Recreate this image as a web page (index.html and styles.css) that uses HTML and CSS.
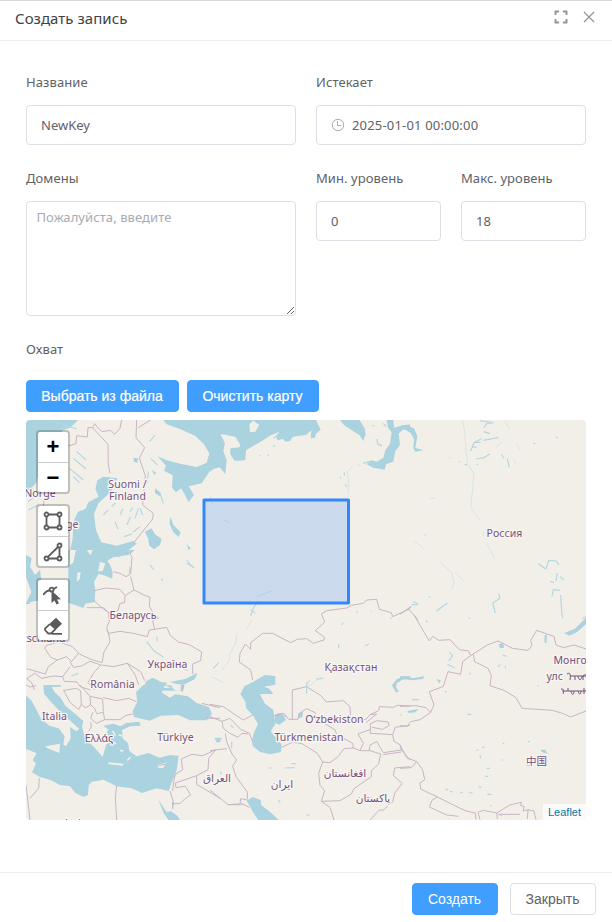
FILE: index.html
```html
<!DOCTYPE html>
<html lang="ru">
<head>
<meta charset="utf-8">
<title>Создать запись</title>
<link rel="stylesheet" href="styles.css">
</head>
<body>
<div class="dialog">
  <header class="head">
    <h1 class="title">Создать запись</h1>
    <div class="head-actions">
      <svg width="14" height="14" viewBox="0 0 14 14" fill="none" stroke="#909399" stroke-width="1.9"><path d="M1.500 5V1.500h3.600M8.900 1.500h3.600V5M12.500 9v3.500H8.900M5.100 12.500H1.500V9"/></svg>
      <svg width="12" height="12" viewBox="0 0 12 12" fill="none" stroke="#909399" stroke-width="1.2"><path d="M1 1l10 10M11 1L1 11"/></svg>
    </div>
  </header>
  <main class="body">
    <div class="grid">
      <div class="field wide"><label class="label">Название</label><input class="input" value="NewKey"></div>
      <div class="field wide"><label class="label">Истекает</label>
        <div class="input date"><svg width="14" height="14" viewBox="0 0 14 14" fill="none" stroke="#a8abb2"><circle cx="7" cy="7" r="5.700"/><path d="M6.500 3.500v4h3.700"/></svg><span>2025-01-01 00:00:00</span></div></div>
      <div class="field wide"><label class="label">Домены</label><textarea class="area" placeholder="Пожалуйста, введите"></textarea></div>
      <div class="field"><label class="label">Мин. уровень</label><input class="input" value="0"></div>
      <div class="field"><label class="label">Макс. уровень</label><input class="input" value="18"></div>
    </div>
    <label class="label extent">Охват</label>
    <div class="row"><button class="btn primary">Выбрать из файла</button><button class="btn primary">Очистить карту</button></div>
    <div class="map">
      <svg class="tiles" width="560" height="400" viewBox="26 420 560 400">
        <!-- Scandinavia, Baltic, White Sea -->
        <g transform="translate(20 415) scale(.33333)">
          <path class="w" d="M18 15H175L150 38 128 46 118 70 98 92 80 130 62 160 48 205 18 235Z"/>
          <path class="w" d="M430 15L440 28 480 42 525 62 552 88 568 115 560 143 530 156 480 146 440 136 413 124 438 152 432 168 458 180 456 218 468 232 484 220 506 262 522 240 506 214 545 205 556 188 572 165 602 155V15Z"/>
          <path class="w" d="M292 190L250 185 232 196 226 222 236 245 205 262 196 282 174 290 160 320 158 370 146 425H300L350 386 340 378 290 392 244 382 228 346 222 296 236 264 262 240 284 216Z"/>
          <path class="w" d="M375 350L395 340 405 358 425 372 420 390 402 403 388 392 384 370ZM452 305L460 330 482 352 476 366 460 352 448 325ZM405 220l18 14-4 10-14-10ZM340 128l14 2-2 14-10-4ZM500 388l12 12-6 6ZM395 165l14 8-6 6Z"/>
          <path class="lake" d="M100 20l70 22M105 48l50-16M98 80l22-20M170 110l28 25M160 130l38 32M148 160l42 35M160 185l18 18M405 60l-16 20M385 170l-3 35M392 130l20 20M420 235l10 30M25 260l25-20M25 285l30-15M300 300l8-18M320 330l12-25M345 310l10-30M285 320l9 22M340 350l20-15M250 300l15-16M360 280l8 20M312 365l24-8M275 275l12-12M330 290l8-12"/>
          <path class="b" d="M145 93L168 86 170 62 202 66 204 38 218 38 224 26 232 36 246 50 272 46 284 58 300 40 305 15M218 38L264 88 265 150 270 175M350 15L348 68 374 98 358 130 376 182 368 270 400 295 398 312 342 382M355 38L392 15M70 275L72 255 95 240"/>
        </g>
        <!-- Eastern Baltic, Denmark, Eastern Europe -->
        <g transform="translate(20 550) scale(.33333)">
          <path class="w" d="M145 0H342L325 15 282 20 262 32 272 48 278 68 277 86 252 76 236 72 222 95 226 122 224 156 196 161 190 174 145 158Z"/>
          <path class="w" d="M18 15L35 25 30 50 45 75 60 60 64 90 60 150 18 160 34 125 18 80Z"/>
          <path class="l" d="M240 36l16 4-8 24-14 0ZM172 68l10-2-3 22-9 8ZM150 0h18l-8 38-12 8ZM200 0h18l-6 16Z"/>
          <path class="w" d="M368 422L378 394 398 383 424 396 442 398 430 414 460 412 490 422ZM450 396L498 386 532 368 524 388 490 404 470 402Z"/>
          <path class="lake" d="M330 50l-2 20M390 45l12 15M425 85l3 8M500 30l20 24M500 40l22 12M380 275l22 28 28 18M410 260l2 15M484 352l20 10M155 378l20-8M260 238l6 16"/>
          <path class="b" d="M280 65L300 70 318 80 332 72 336 22 330 10 342 0M332 80L342 120 315 137 300 118 258 114 222 122M315 137L314 158 300 160 294 182 266 188 244 172 220 150M200 173H250L266 188 268 215 260 232 266 252 270 275 252 306 246 338M342 120L372 135 390 142 388 168 400 190 416 204 398 212 404 238M266 250L300 244 340 250 382 260 388 240 404 238 440 232 452 258 475 276 508 284 545 306 542 332 518 342 518 372M246 338L212 328 178 312 158 290 118 276 80 286 74 294 92 322 112 330 140 320 154 335 176 310M112 330L85 350 76 372 20 356M244 345L280 350 322 340 362 365 374 392M322 340L345 374 356 404M150 335L160 352 184 348 210 334 242 345 220 370 204 398 224 420M20 386L45 370 64 385 100 378 128 380 150 350M20 386l15 12 8 22M128 380l5 14 38 2 10 14 30 10M18 160h12"/>
        </g>
        <!-- Mediterranean and Black Sea -->
        <g transform="translate(20 685) scale(.33333)">
          <path class="w" d="M18 192L50 205 38 225 48 236 36 262 60 276 92 285 120 300 150 304 166 324 190 336 204 330 206 300 216 290 250 284 290 304 335 310 366 324 410 310 446 318 456 290 470 256 476 212 450 210 418 218 385 204 350 214 328 198 324 174 308 160 306 136 330 124 362 122 358 110 318 114 302 124 280 116 250 122 266 134 252 150 270 168 258 180 248 216 222 186 196 162 186 125 190 108 160 82 136 62 122 38 104 22 95 6 122 5V0H70L72 26 94 52 118 78 134 94 152 108 178 132 168 138 150 126 152 160 138 184 130 178 134 154 116 130 88 122 62 100 50 76 34 46 18 32Z"/>
          <path class="w" d="M370 0L348 22 352 50 338 78 342 96 390 107 422 92 475 90 510 106 560 106 576 86 566 66 530 54 504 34 466 28 450 38 428 25 420 0ZM434 0l60 0-6 20-18-6Z"/>
          <path class="l" d="M76 184L120 176 118 204 82 190ZM264 232l48 4-4 6-42-4ZM414 240l28-8-14 18-14-2ZM452 0h30v18l-18-2Z"/>
          <path class="lsm" d="M278 138l8 14M296 150l10 2M280 172l8 4M300 196l10 2M322 226l10-10M168 60l16 24M180 70l8 12M150 62l18 20"/>
          <path class="w" d="M414 342L440 382 452 378 472 392 480 405H446L432 386ZM456 350l6 2-6 24ZM585 158l16 0v14h-12Z"/>
          <path class="b" d="M18 0L30 6 48 2M30 340L56 310 58 280M18 300L24 350 30 405M290 302L286 340 290 405M450 318L460 350 458 372M458 318L462 284 466 268 488 254 484 222 516 208 548 212 588 194M588 194L566 220 564 254 530 272 466 294 468 308 496 304 512 330 494 342 480 356 458 356M530 272L530 298 600 340M131 16L170 10 182 18 184 58 176 74 150 52 131 16M184 58L196 68 212 60 224 70 230 86 250 82 254 104 230 115 212 100 218 82M212 60L210 34 180 0M250 38L290 47 326 40 350 50M210 34L248 42 250 80M254 104L300 104 316 92 340 86M212 112L214 126 206 138M545 55L600 68M560 100h40M416 242l26-6M488 0v16"/>
        </g>
        <!-- Barents and Kara coast -->
        <g transform="translate(210 415) scale(.33333)">
          <path class="w" d="M0 15H318L332 44 318 56 314 70 302 68 304 46 288 60 266 62 248 66 240 78 228 80 218 72 202 76 198 62 208 50 180 62 156 78 128 94 108 106 106 136 74 138 60 116 62 98 88 96 90 88 72 66 32 60 46 78 40 108 50 136 46 178 32 160 20 152 0 170Z"/>
          <path class="l" d="M32 57L76 65 91 90 88 97 62 99 44 84ZM118 28L130 17 148 30 136 50 120 52Z"/>
          <path class="w" d="M390 15H448L464 40 467 58 460 78 448 60 420 42 402 30ZM530 15L534 38 545 52 540 86 526 106 520 128 500 140 484 136 470 148 490 158 524 164 528 148 550 140 556 108 570 90 566 56 578 44 600 38V28L574 32 552 38 550 15Z"/>
          <path class="lake" d="M190 70l15-10M188 95l8-4M148 120l2 3M175 118v5M500 72l4 16 12 4M520 25l8 10M488 30l4 4M402 172l2 10M390 186l4 4M405 208l6 8M460 145l20-6 14 14"/>
          <path class="r" d="M415 236V190L412 170 428 150M440 148l12 4M40 315l20 8M0 242l8 26"/>
        </g>
        <!-- Caspian and Central Asia -->
        <g transform="translate(210 590) scale(.33333)">
          <path class="w" d="M196 258L165 255 130 275 104 288 91 312 106 335 108 354 130 378 144 402 132 428 126 450 128 468 150 486 180 493 213 486 215 464 194 438 182 424 196 402 190 360 164 340 154 320 150 312 190 312 178 296 162 290 196 284ZM196 372L216 370 228 390 208 404 194 398ZM110 632L128 621 152 630 154 646 176 662 206 690H145L130 668ZM265 370l14-4-2 16-12 2Z"/>
          <path class="w" d="M546 286L560 268 580 260 600 258V264L576 270 560 280 558 292 566 304 558 308Z"/>
          <path class="lake" d="M122 78l8-24 14-20M122 60l14 10M10 236l16-18M290 310v-30l10-8M318 268l22-4M395 105l5-8M465 168l12-6M386 162v12M440 70l3-6M540 84h6M484 62v3M205 370l24 10M14 448l22-2M65 455v20M62 405l8 8M30 545l5 8M175 534h10M224 534l30-1M245 521h12M0 368v18M205 630l6 8M290 675h10"/>
          <path class="r" d="M140 20l48-18M126 90L108 118M82 130L76 160 60 190 58 212 36 240M5 260l35 18M295 290l30-24M98 210v4"/>
          <path class="b" d="M128 270L122 240 88 216 90 190 106 162 122 178 122 158 158 130 188 130 242 158 262 148 290 146 310 160 342 150 344 142 316 122 344 96 334 72 350 62 410 54 424 46 460 40 470 30 500 28 508 58 544 68 548 80 600 56M0 343L40 350 78 376 100 390 128 375M0 380L36 394 60 385 92 418 118 430 128 455M36 394L40 415 60 430 84 442 96 430 114 432M46 430L50 455 66 492 80 510 68 528 78 560 112 606 112 628M0 482L50 476M0 600L54 644 90 642 92 626 112 630M94 640l24 12M54 644H95M190 378L222 370 236 388H264M247 388V300L290 290 334 318 348 336 400 332 420 350 422 386 450 390 468 388 480 374 506 362 508 350 550 352 562 346 600 348M264 388L268 370 290 356 316 368 318 392 346 402 376 420 380 434 428 460 430 476M215 472L250 456 278 462 322 490 338 516 326 550 330 586 344 602 334 634 390 632 424 612 432 596 484 560 484 542 506 522 512 492 480 482 450 482 430 474 402 476 384 500 360 518 338 516M334 634L360 652 372 690M450 482L460 460 444 432 482 418 480 402 500 392 534 396 538 406 518 418 486 412M468 398L500 372 480 374M480 418L482 430 548 434 556 412 600 406M548 434L552 454 570 464 574 480 520 488 500 454 480 466 478 482M574 480L600 510M520 494L574 486M600 530L554 534 550 556 576 580 554 610 548 636 520 660 508 660 480 690"/>
        </g>
        <!-- Siberia -->
        <g transform="translate(400 415) scale(.33333)">
          <path class="w" d="M0 34L16 29 42 40 52 64 46 98 70 106 46 110 40 100 42 72 32 54 12 42 0 48Z"/>
          <path class="lake" d="M212 108l10-25 22-12M222 82l20 0M216 95l14 2M250 76l45-8M228 132l24-4 18-12M240 17l40 6M252 38l8-12 20-3M250 50l20 6M468 66l5 2M400 84l6 2M148 126l2 3M176 139l5 2M230 150l4-2M194 148l8 2M415 446l22 16 10-26 22 2 8 12M472 474l-4 24M480 485l12 10M450 500l12 2M456 544l4-20 20 2M482 540l4 62M296 536l4 14-22 14 8 30M110 588l32-24M86 546h6M36 568l18 2M76 358v4M305 118l6 12M322 130l6 28M40 560l14 6M548 612l10-8"/>
          <path class="r" d="M188 15L194 50 198 100 202 146 222 175 218 220 212 278 242 318M250 350v12M260 385l24 46M42 378l30 24M120 440l36 34 6 30-8 20M165 472l30 30M90 250h14M315 20l14 22M350 85l10 20M288 98l20-20M340 130l8 18"/>
          <path class="b" d="M0 598L34 574 26 582 54 614"/>
        </g>
        <!-- Mongolia and China -->
        <g transform="translate(400 615) scale(.33333)">
          <path class="w" d="M492 54L524 42 558 8V28L530 52 508 62ZM434 62l7-4-2 28-6-6ZM296 88l14-4 2 14-12 2ZM0 184H20L36 190 74 184 68 192 34 196 0 190ZM22 288l34-6-10 10-20 2ZM422 404l14 0 6 12-16-4ZM110 192l12 4-4 10Z"/>
          <path class="lake" d="M142 148l22 10M148 112l10 10-12 16M210 172v8M308 120l12 4M300 148l-6 8M316 152v8M36 254h20M134 228l6 4M202 298h12M78 16l4 6M412 212h4M384 380h6M246 396l8 2M228 405h8M240 420l2 10M236 514l8 4M262 538l12 0M208 532l10 2M180 534l8-2M136 522l8 2M256 484h8M260 460h10M308 385h5M305 435h5M150 530h8M270 572l5 2M380 452h10M300 600l6 2M488 0v10M206 10h5M0 300h6"/>
          <path class="b" d="M42 0L88 78 98 64 116 76 150 74 178 104 206 108 212 122 188 140 182 178 144 170 130 214 88 230 102 270 92 292 78 278 48 272 0 274M92 292L60 314 32 320 22 334 0 332M212 122L262 90 294 78 338 100 384 106 396 92 392 76 410 46 462 64 468 90 490 98 522 90 558 102M220 118L224 140 264 160 274 182 270 212 312 226 348 248 366 280 458 286 490 296 512 306 558 288M0 390L20 428 50 440 68 464 74 494 60 504 62 522 112 546 164 572 198 588 226 594 228 614M50 440L34 458 0 460M112 546L96 556 88 576 140 600 176 604M240 614L234 592 250 586 290 594 292 612M290 594L330 570 364 562 362 572 372 574 370 588 384 584 382 612M384 584L402 588 408 614M294 598L360 598"/>
        </g>
        <rect class="bbox" x="204" y="500" width="144.500" height="103"/>
        <g class="names">
          <text x="40" y="497">Norge</text><text x="60" y="528">Sverige</text>
          <text x="127.500" y="488">Suomi /</text><text x="127.500" y="500">Finland</text>
          <text x="133" y="619">Беларусь</text><text x="34" y="642">Deutschland</text>
          <text x="167.500" y="668">Україна</text><text x="112.500" y="687.500">România</text>
          <text x="54.500" y="720">Italia</text><text x="99" y="742">Ελλάς</text><text x="175.500" y="740.500">Türkiye</text>
          <text x="504.500" y="537">Россия</text><text x="351" y="671">Қазақстан</text>
          <text x="334.500" y="723">Oʻzbekiston</text><text x="309" y="741">Türkmenistan</text>
          <text x="217" y="782">العراق</text><text x="282" y="788">ایران</text><text x="345" y="777">افغانستان</text><text x="373" y="802">پاکستان</text>
          <text x="73" y="827">ليبيا</text><text x="143" y="827">مصر</text>
          <text x="536.500" y="765">中国</text>
          <text class="start" x="553.500" y="664">Монгол</text><text class="start" x="546.500" y="680">улс</text>
        </g>
        <path class="script" d="M567 674c3-2 4 0 3 6M570 676h16M575 676v4M578 676c1 5 3 5 4 0M583 680v-4q3-3 5 0M561 689c3-1 3 3 2 5M562 691h24M568 691v-3M571 691c1 5 3 4 3 0M578 691c1 4 3 4 3 0M584 694v-6"/>
      </svg>
      <div class="controls">
        <div class="bar"><span class="zoom">+</span><span class="zoom">−</span></div>
        <div class="bar">
          <span><svg width="20" height="20" viewBox="0 0 20 20" class="tool"><path d="M5.200 3.500h9.600M5.200 16.500h9.600M3.500 5.200v9.600M16.500 5.200v9.600"/><circle cx="3.500" cy="3.500" r="2"/><circle cx="16.500" cy="3.500" r="2"/><circle cx="3.500" cy="16.500" r="2"/><circle cx="16.500" cy="16.500" r="2"/></svg></span>
          <span><svg width="20" height="20" viewBox="0 0 20 20" class="tool"><path d="M5.500 16.500h9M16.500 5.500v9M4.900 14.800L15 5"/><circle cx="16.500" cy="3.500" r="2"/><circle cx="3.500" cy="16.500" r="2"/><circle cx="16.500" cy="16.500" r="2"/></svg></span>
        </div>
        <div class="bar">
          <span><svg width="20" height="20" viewBox="0 0 20 20" class="tool"><path d="M0 10C2 7 4.500 5.500 7 5M10.500 4L14 2"/><circle cx="8.600" cy="4.600" r="2"/><path class="solid" d="M8.500 5.500V18l3-2.500 2 4 2.500-1.200-2-3.800 4-.3Z"/></svg></span>
          <span><svg width="20" height="20" viewBox="0 0 20 20" class="tool"><path d="M9 17.800h10M6.500 8.300L2 12.600V14L5.300 17.500H8L12.500 13.200"/><path class="solid" d="M6 8.200L13 1.800 19 7.800 12.500 14Z"/></svg></span>
        </div>
      </div>
      <div class="credit">Leaflet</div>
    </div>
  </main>
  <footer class="foot"><button class="btn primary save">Создать</button><button class="btn plain">Закрыть</button></footer>
</div>
</body>
</html>
```
FILE: styles.css
```css
* { box-sizing: border-box; }
body { margin: 0; background: #fff; color: #606266; font: 13px/20px "Noto Sans", sans-serif; }
.dialog { height: 922px; display: flex; flex-direction: column; border-top: 1px solid #d8d8d8; }
.head { height: 40px; flex: none; display: flex; justify-content: space-between; padding: 0 17px 0 15px; border-bottom: 1px solid #ebeef0; }
.title { margin: 6px 0 0; font-size: 15px; line-height: 22px; font-weight: 400; color: #404245; letter-spacing: .04px; }
.head-actions { display: flex; align-items: center; gap: 15px; height: 31px; }
.body { flex: 1; padding: 26px 26px 0; }
.grid { display: grid; grid-template-columns: repeat(4, 125px); gap: 18px 20px; }
.field { display: flex; flex-direction: column; }
.wide { grid-column: span 2; }
.label { display: block; height: 38px; padding-top: 5px; font-size: 13px; letter-spacing: .08px; white-space: nowrap; }
.input { width: 100%; height: 40px; padding: 0 14px; border: 1px solid #dcdfe6; border-radius: 4px; background: #fff; color: #606266; font: 13px "Noto Sans", sans-serif; outline: 0; }
.date { display: flex; align-items: center; gap: 7px; letter-spacing: .18px; }
.area { width: 100%; height: 115px; padding: 5px 9px 5px 9.500px; border: 1px solid #dcdfe6; border-radius: 4px; font: 13px/20px "Noto Sans", sans-serif; letter-spacing: .08px; resize: both; }
.area::placeholder { color: #a8abb2; }
.extent { margin-top: 17px; height: 47px; padding-top: 6px; }
.row { display: flex; gap: 8px; }
.btn { height: 32px; padding: 0 14px 0 13px; border: 1px solid #dcdfe6; border-radius: 4px; background: #fff; color: #606266; font: 14px "Liberation Sans", Arial, sans-serif; white-space: nowrap; }
.primary { background: #409eff; border-color: #409eff; color: #fff; }
.row .btn { -webkit-text-stroke: .2px #fff; }
.row .btn:first-child { width: 153px; }
.row .btn:last-child { width: 132px; }
.map { position: relative; height: 400px; margin-top: 8px; border-radius: 4px; overflow: hidden; background: #f2efe9; }
.tiles { display: block; }
.w { fill: #aad3df; }
.l { fill: #f2efe9; }
.lsm { fill: none; stroke: #f2efe9; stroke-width: 5; }
.lake { fill: none; stroke: #b4d7e1; stroke-width: 3.500; stroke-linejoin: round; }
.r { fill: none; stroke: #d5e3e4; stroke-width: 2.800; }
.b { fill: none; stroke: #c9b4c5; stroke-width: 3; stroke-linejoin: round; }
.bbox { fill: #3388ff; fill-opacity: .2; stroke: #3388ff; stroke-width: 3; stroke-linejoin: round; }
.names { font: 10.500px "Noto Sans", "DejaVu Sans", "Noto Sans CJK SC", sans-serif; letter-spacing: .1px; fill: #75517a; text-anchor: middle; paint-order: stroke; stroke: #f8f6f3; stroke-width: 2.500px; }
.start { text-anchor: start; }
.script { fill: none; stroke: #75517a; stroke-width: 1; }
.controls { position: absolute; left: 10px; top: 10px; display: flex; flex-direction: column; gap: 10px; }
.bar { width: 34px; height: 64px; border: 2px solid rgba(0,0,0,.2); border-radius: 4px; background: #fff; background-clip: padding-box; }
.bar span { display: flex; align-items: center; justify-content: center; height: 30px; }
.bar span:first-child { height: 31px; border-bottom: 1px solid #ccc; }
.zoom { color: #000; font: bold 22px "Liberation Sans", sans-serif; }
.tool { fill: none; stroke: #5b5b5b; stroke-width: 1.800; }
.solid { fill: #5b5b5b; stroke: none; }
.credit { position: absolute; right: 0; bottom: 0; height: 16px; padding: 0 5px; background: rgba(255,255,255,.75); color: #0078a8; font: 11px/16px "Liberation Sans", sans-serif; }
.foot { height: 50px; flex: none; display: flex; justify-content: flex-end; gap: 12px; padding: 10px 16px 0; border-top: 1px solid #ebeef0; }
.foot .btn { width: 86px; }
```
